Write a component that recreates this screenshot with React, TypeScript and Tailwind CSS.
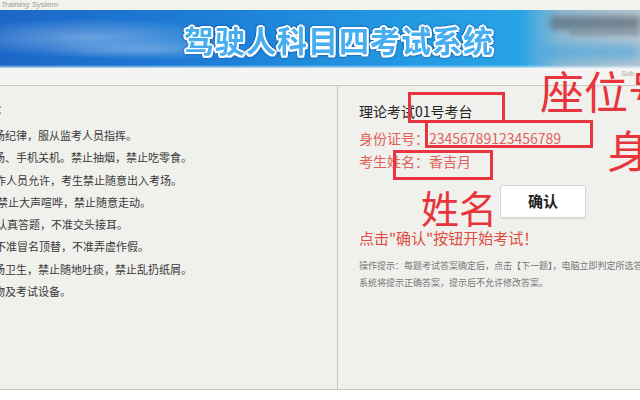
const RULES: { text: string; shift: string }[] = [
  { text: '场纪律，服从监考人员指挥。', shift: '-ml-[6px]' },
  { text: '场、手机关机。禁止抽烟，禁止吃零食。', shift: '-ml-[6px]' },
  { text: '作人员允许，考生禁止随意出入考场。', shift: '-ml-[5px]' },
  { text: '禁止大声喧哗，禁止随意走动。', shift: '-ml-[3px]' },
  { text: '认真答题，不准交头接耳。', shift: '-ml-[4px]' },
  { text: '不准冒名顶替，不准弄虚作假。', shift: '-ml-[5px]' },
  { text: '场卫生，禁止随地吐痰，禁止乱扔纸屑。', shift: '-ml-[6px]' },
  { text: '物及考试设备。', shift: '-ml-[6px]' },
]

function Banner() {
  return (
    <div className="relative h-[58px] overflow-hidden bg-[linear-gradient(90deg,#1c66c8_0%,#1d80d8_35%,#239ae2_65%,#2eaeea_100%)]">
      {/* light streaks on the left */}
      <div className="absolute left-[-60px] top-[8px] h-[40px] w-[300px] rounded-[50%] bg-[radial-gradient(ellipse_at_center,rgba(255,255,255,0.35)_0%,rgba(255,255,255,0)_70%)]" />
      <div className="absolute left-[40px] top-[30px] h-[20px] w-[220px] rounded-[50%] bg-[radial-gradient(ellipse_at_center,rgba(255,255,255,0.25)_0%,rgba(255,255,255,0)_70%)]" />
      {/* photo on the right */}
      <div className="absolute right-0 top-0 h-full w-[120px] bg-[linear-gradient(90deg,rgba(180,200,215,0)_0%,rgba(170,190,205,0.8)_35%,#b9c6cf_100%)]">
        <div className="absolute left-[30px] top-[6px] h-[14px] w-[90px] bg-[#5a6a78] opacity-70 blur-[3px]" />
        <div className="absolute left-[50px] top-[18px] h-[8px] w-[70px] bg-[#7d8c98] opacity-60 blur-[2px]" />
        <div className="absolute left-[20px] top-[34px] h-[16px] w-[100px] bg-[#4aa6de] opacity-60 blur-[4px]" />
      </div>
      <div className="absolute bottom-0 left-0 h-[3px] w-full bg-[linear-gradient(180deg,rgba(255,255,255,0)_0%,rgba(230,245,255,0.8)_100%)]" />
      <div className="relative flex h-full items-center justify-center pl-[38px]">
        <span className="text-[30px] font-bold leading-none tracking-[1px] text-[#45adf0] [text-shadow:2px_0_0_#fff,-2px_0_0_#fff,0_2px_0_#fff,0_-2px_0_#fff,1.5px_1.5px_0_#fff,-1.5px_-1.5px_0_#fff,1.5px_-1.5px_0_#fff,-1.5px_1.5px_0_#fff] [filter:drop-shadow(0_0_1px_#0b4a9a)]">
          驾驶人科目四考试系统
        </span>
      </div>
    </div>
  )
}

export default function App() {
  return (
    <div className="relative h-[400px] w-[640px] overflow-hidden bg-white font-['Noto_Sans_CJK_SC','Noto_Sans',sans-serif] text-[#333]">
      {/* top strip */}
      <div className="h-[10px] bg-[#f2f2ef] pl-[1px] font-['Liberation_Sans',sans-serif] text-[8px] italic leading-[9px] text-[#9a9a9a]">
        Training System
      </div>

      <Banner />

      <div className="flex h-[17px] justify-end bg-[#f4f4f2] pr-[6px] pt-[2px]">
        <span className="font-['Liberation_Sans',sans-serif] text-[7px] leading-[8px] text-[#aaa]">Sub</span>
      </div>

      {/* main panels */}
      <div className="flex h-[305px] border-y border-[#c9c9c6] bg-[#f0f0ed]">
        <div className="w-[338px] overflow-hidden border-r border-[#c4c4c0] pt-[12px] text-[11px] text-[#3a3a3a]">
          <div className="-ml-[3px] leading-[22px]">：</div>
          <div className="mt-[4px] flex flex-col">
            {RULES.map((r) => (
              <div key={r.text} className={`${r.shift} whitespace-nowrap leading-[22.3px]`}>
                {r.text}
              </div>
            ))}
          </div>
        </div>

        <div className="flex flex-1 flex-col overflow-hidden pl-[21px] pt-[13px]">
          <div className="text-[14px] leading-[24px] text-[#222]">理论考试01号考台</div>
          <div className="mt-[3px] text-[14px] leading-[24px] text-[#e0625a]">身份证号：23456789123456789</div>
          <div className="text-[14px] leading-[22px] text-[#e0625a]">考生姓名：香吉月</div>
          <div className="mt-[13px] flex pl-[141px]">
            <button
              type="button"
              className="h-[33px] w-[86px] rounded-[2px] border border-[#d6d6d6] bg-white text-[15px] font-bold text-[#222] shadow-[0_1px_1px_rgba(0,0,0,0.08)]"
            >
              确认
            </button>
          </div>
          <div className="mt-[9px] text-[15px] leading-[22px] text-[#e04c3e]">点击"确认"按钮开始考试！</div>
          <div className="mt-[8px] whitespace-nowrap text-[9px] leading-[17px] text-[#777]">
            <div>操作提示：每题考试答案确定后，点击【下一题】，电脑立即判定所选答案，如选择错误，</div>
            <div>系统将提示正确答案，提示后不允许修改答案。</div>
          </div>
        </div>
      </div>

      {/* red annotations drawn over the screenshot */}
      <div className="absolute left-[408px] top-[92px] h-[31px] w-[97px] border-[3px] border-[#e8343c]" />
      <div className="absolute left-[425px] top-[120px] h-[28px] w-[168px] border-[3px] border-[#e8343c]" />
      <div className="absolute left-[393px] top-[150px] h-[30px] w-[100px] border-[3px] border-[#e8343c]" />
      <div className="absolute left-[540px] top-[68px] whitespace-nowrap text-[44px] leading-none text-[#e8343c]">座位号</div>
      <div className="absolute left-[607px] top-[127px] text-[44px] leading-none text-[#e8343c]">身</div>
      <div className="absolute left-[421px] top-[188px] text-[38px] leading-none text-[#e8343c]">姓名</div>
    </div>
  )
}
